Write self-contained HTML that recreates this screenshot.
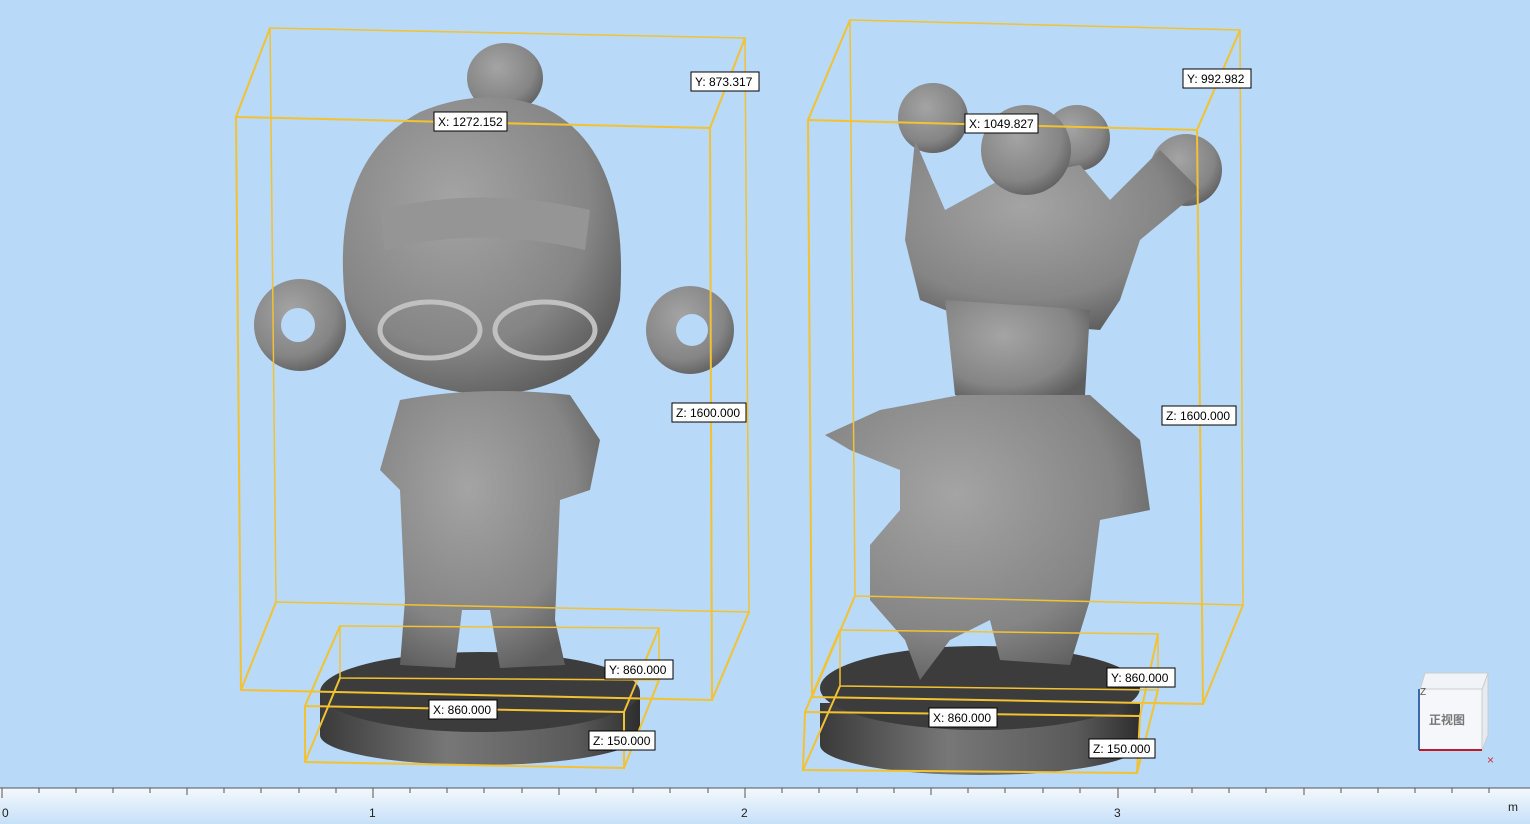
<!DOCTYPE html>
<html><head><meta charset="utf-8"><style>
html,body{margin:0;padding:0;width:1530px;height:824px;overflow:hidden;background:#b8d9f7;}
svg{display:block}
text{font-family:"Liberation Sans","Noto Sans CJK SC",sans-serif}
</style></head><body>
<svg width="1530" height="824" viewBox="0 0 1530 824" xmlns="http://www.w3.org/2000/svg">
<defs>
<radialGradient id="g" cx="40%" cy="35%" r="70%"><stop offset="0" stop-color="#a4a4a4"/><stop offset="0.7" stop-color="#858585"/><stop offset="1" stop-color="#5e5e5e"/></radialGradient>
<linearGradient id="base" x1="0" x2="1"><stop offset="0" stop-color="#3a3a3a"/><stop offset="0.4" stop-color="#777"/><stop offset="0.8" stop-color="#5a5a5a"/><stop offset="1" stop-color="#2e2e2e"/></linearGradient>
<linearGradient id="rul" x1="0" y1="0" x2="0" y2="1"><stop offset="0" stop-color="#f4f8fd"/><stop offset="1" stop-color="#c6e0f8"/></linearGradient>
</defs>
<rect width="1530" height="824" fill="#b8d9f7"/>

<!-- LEFT FIGURE -->
<g>
<path d="M320 692 L320 735 A160 30 0 0 0 640 735 L640 692 Z" fill="url(#base)"/>
<ellipse cx="480" cy="692" rx="160" ry="40" fill="#3c3c3c"/>
<ellipse cx="505" cy="78" rx="38" ry="35" fill="url(#g)"/>
<circle cx="300" cy="325" r="46" fill="url(#g)"/><circle cx="298" cy="325" r="17" fill="#b8d9f7"/>
<circle cx="690" cy="330" r="44" fill="url(#g)"/><circle cx="692" cy="330" r="16" fill="#b8d9f7"/>
<path d="M345 300 Q330 160 420 112 Q485 85 545 108 Q630 150 620 300 Q600 390 490 395 Q370 390 345 300 Z" fill="url(#g)"/>
<path d="M380 210 Q480 185 590 210 L585 250 Q480 225 385 250 Z" fill="#959595"/>
<ellipse cx="430" cy="330" rx="50" ry="28" fill="none" stroke="#c0c0c0" stroke-width="5"/>
<ellipse cx="545" cy="330" rx="50" ry="28" fill="none" stroke="#c0c0c0" stroke-width="5"/>
<path d="M400 400 Q480 385 570 395 L600 440 L590 490 L560 500 L555 620 L565 665 L500 668 L490 610 L462 610 L455 668 L400 665 L405 600 L400 490 L380 470 Z" fill="url(#g)"/>
</g>

<!-- RIGHT FIGURE -->
<g>
<path d="M820 703 L820 745 A160 30 0 0 0 1140 745 L1140 703 Z" fill="url(#base)"/>
<ellipse cx="980" cy="688" rx="160" ry="42" fill="#3c3c3c"/>
<circle cx="933" cy="118" r="35" fill="url(#g)"/>
<circle cx="1077" cy="138" r="33" fill="url(#g)"/>
<circle cx="1186" cy="170" r="36" fill="url(#g)"/>
<path d="M915 140 L945 210 L1000 180 L1080 165 L1110 200 L1160 150 L1200 190 L1140 240 L1120 300 L1100 330 L970 320 L920 300 L905 240 Z" fill="url(#g)"/>
<circle cx="1026" cy="150" r="45" fill="url(#g)"/>
<path d="M945 300 L1090 310 L1085 395 Q1020 410 955 395 Z" fill="url(#g)"/>
<path d="M880 410 L960 395 L1090 395 L1140 440 L1150 510 L1100 520 L1090 600 L1070 665 L1000 660 L990 620 L950 640 L920 680 L905 640 L870 600 L870 545 L900 510 L900 470 L850 450 L825 435 Z" fill="url(#g)"/>
</g>

<!-- boxes -->
<g fill="none" stroke="#f2c232" stroke-width="2">
<path d="M270 28 L745 38 L749 612 L276 602 Z" stroke-width="1.5"/>
<path d="M236 117 L710 128 L712 700 L241 690 Z"/>
<path d="M236 117 L270 28 M710 128 L745 38 M241 690 L276 602 M712 700 L749 612"/>
<path d="M340 626 L659 628 L659 680 L340 678 Z" stroke-width="1.5"/>
<path d="M305 706 L624 712 L624 768 L305 762 Z"/>
<path d="M305 706 L340 626 M624 712 L659 628 M305 762 L340 678 M624 768 L659 680"/>
<path d="M850 20 L1240 30 L1243 605 L855 596 Z" stroke-width="1.5"/>
<path d="M808 120 L1197 130 L1203 704 L812 697 Z"/>
<path d="M808 120 L850 20 M1197 130 L1240 30 M812 697 L855 596 M1203 704 L1243 605"/>
<path d="M840 630 L1158 634 L1158 690 L840 686 Z" stroke-width="1.5"/>
<path d="M805 712 L1140 716 L1137 773 L803 770 Z"/>
<path d="M805 712 L840 630 M1140 716 L1158 634 M803 770 L840 686 M1137 773 L1158 690"/>
</g>

<!-- labels -->
<g font-size="12" fill="#000">
<rect x="691" y="72" width="68" height="19" fill="#fff" stroke="#000"/><text x="695" y="86">Y: 873.317</text>
<rect x="434" y="112" width="73" height="19" fill="#fff" stroke="#000"/><text x="438" y="126">X: 1272.152</text>
<rect x="672" y="403" width="74" height="19" fill="#fff" stroke="#000"/><text x="676" y="417">Z: 1600.000</text>
<rect x="605" y="660" width="68" height="19" fill="#fff" stroke="#000"/><text x="609" y="674">Y: 860.000</text>
<rect x="429" y="700" width="68" height="19" fill="#fff" stroke="#000"/><text x="433" y="714">X: 860.000</text>
<rect x="589" y="731" width="66" height="19" fill="#fff" stroke="#000"/><text x="593" y="745">Z: 150.000</text>
<rect x="1183" y="69" width="68" height="19" fill="#fff" stroke="#000"/><text x="1187" y="83">Y: 992.982</text>
<rect x="965" y="114" width="73" height="19" fill="#fff" stroke="#000"/><text x="969" y="128">X: 1049.827</text>
<rect x="1162" y="406" width="74" height="19" fill="#fff" stroke="#000"/><text x="1166" y="420">Z: 1600.000</text>
<rect x="1107" y="668" width="68" height="19" fill="#fff" stroke="#000"/><text x="1111" y="682">Y: 860.000</text>
<rect x="929" y="708" width="68" height="19" fill="#fff" stroke="#000"/><text x="933" y="722">X: 860.000</text>
<rect x="1089" y="739" width="66" height="19" fill="#fff" stroke="#000"/><text x="1093" y="753">Z: 150.000</text>
</g>

<!-- view cube -->
<g>
<path d="M1425 673 L1488 673 L1482 690 L1420 690 Z" fill="#f0f3f8" stroke="#ccc"/>
<path d="M1482 690 L1488 673 L1488 735 L1482 750 Z" fill="#e6ebf2" stroke="#ccc"/>
<rect x="1419" y="689" width="63" height="61" fill="#f5f7fa" stroke="#ccc"/>
<line x1="1419" y1="689" x2="1419" y2="750" stroke="#3a6aa8" stroke-width="2"/>
<line x1="1419" y1="750" x2="1482" y2="750" stroke="#c0182a" stroke-width="2"/>
<text x="1429" y="724" font-size="12" font-weight="bold" fill="#777">正视图</text>
<text x="1420" y="695" font-size="10" fill="#555">Z</text>
<text x="1487" y="764" font-size="12" fill="#d03040">×</text>
</g>

<!-- ruler -->
<rect x="0" y="788" width="1530" height="36" fill="url(#rul)"/>
<line x1="0" y1="788" x2="1530" y2="788" stroke="#555" stroke-width="1"/>
<g stroke="#555" stroke-width="1">
<path d="M2 788v10M39 788v5M76 788v5M113 788v5M150 788v5M187 788v7M224 788v5M261 788v5M299 788v5M336 788v5M373 788v10M410 788v5M447 788v5M484 788v5M522 788v5M559 788v7M596 788v5M633 788v5M670 788v5M708 788v5M745 788v10M782 788v5M819 788v5M857 788v5M894 788v5M931 788v7M968 788v5M1005 788v5M1043 788v5M1080 788v5M1118 788v10M1155 788v5M1192 788v5M1229 788v5M1266 788v5M1304 788v7M1341 788v5M1378 788v5M1415 788v5M1452 788v5M1489 788v5"/>
</g>
<g font-size="12" fill="#222">
<text x="2" y="817">0</text><text x="369" y="817">1</text><text x="741" y="817">2</text><text x="1114" y="817">3</text><text x="1508" y="811">m</text>
</g>
</svg>
</body></html>
